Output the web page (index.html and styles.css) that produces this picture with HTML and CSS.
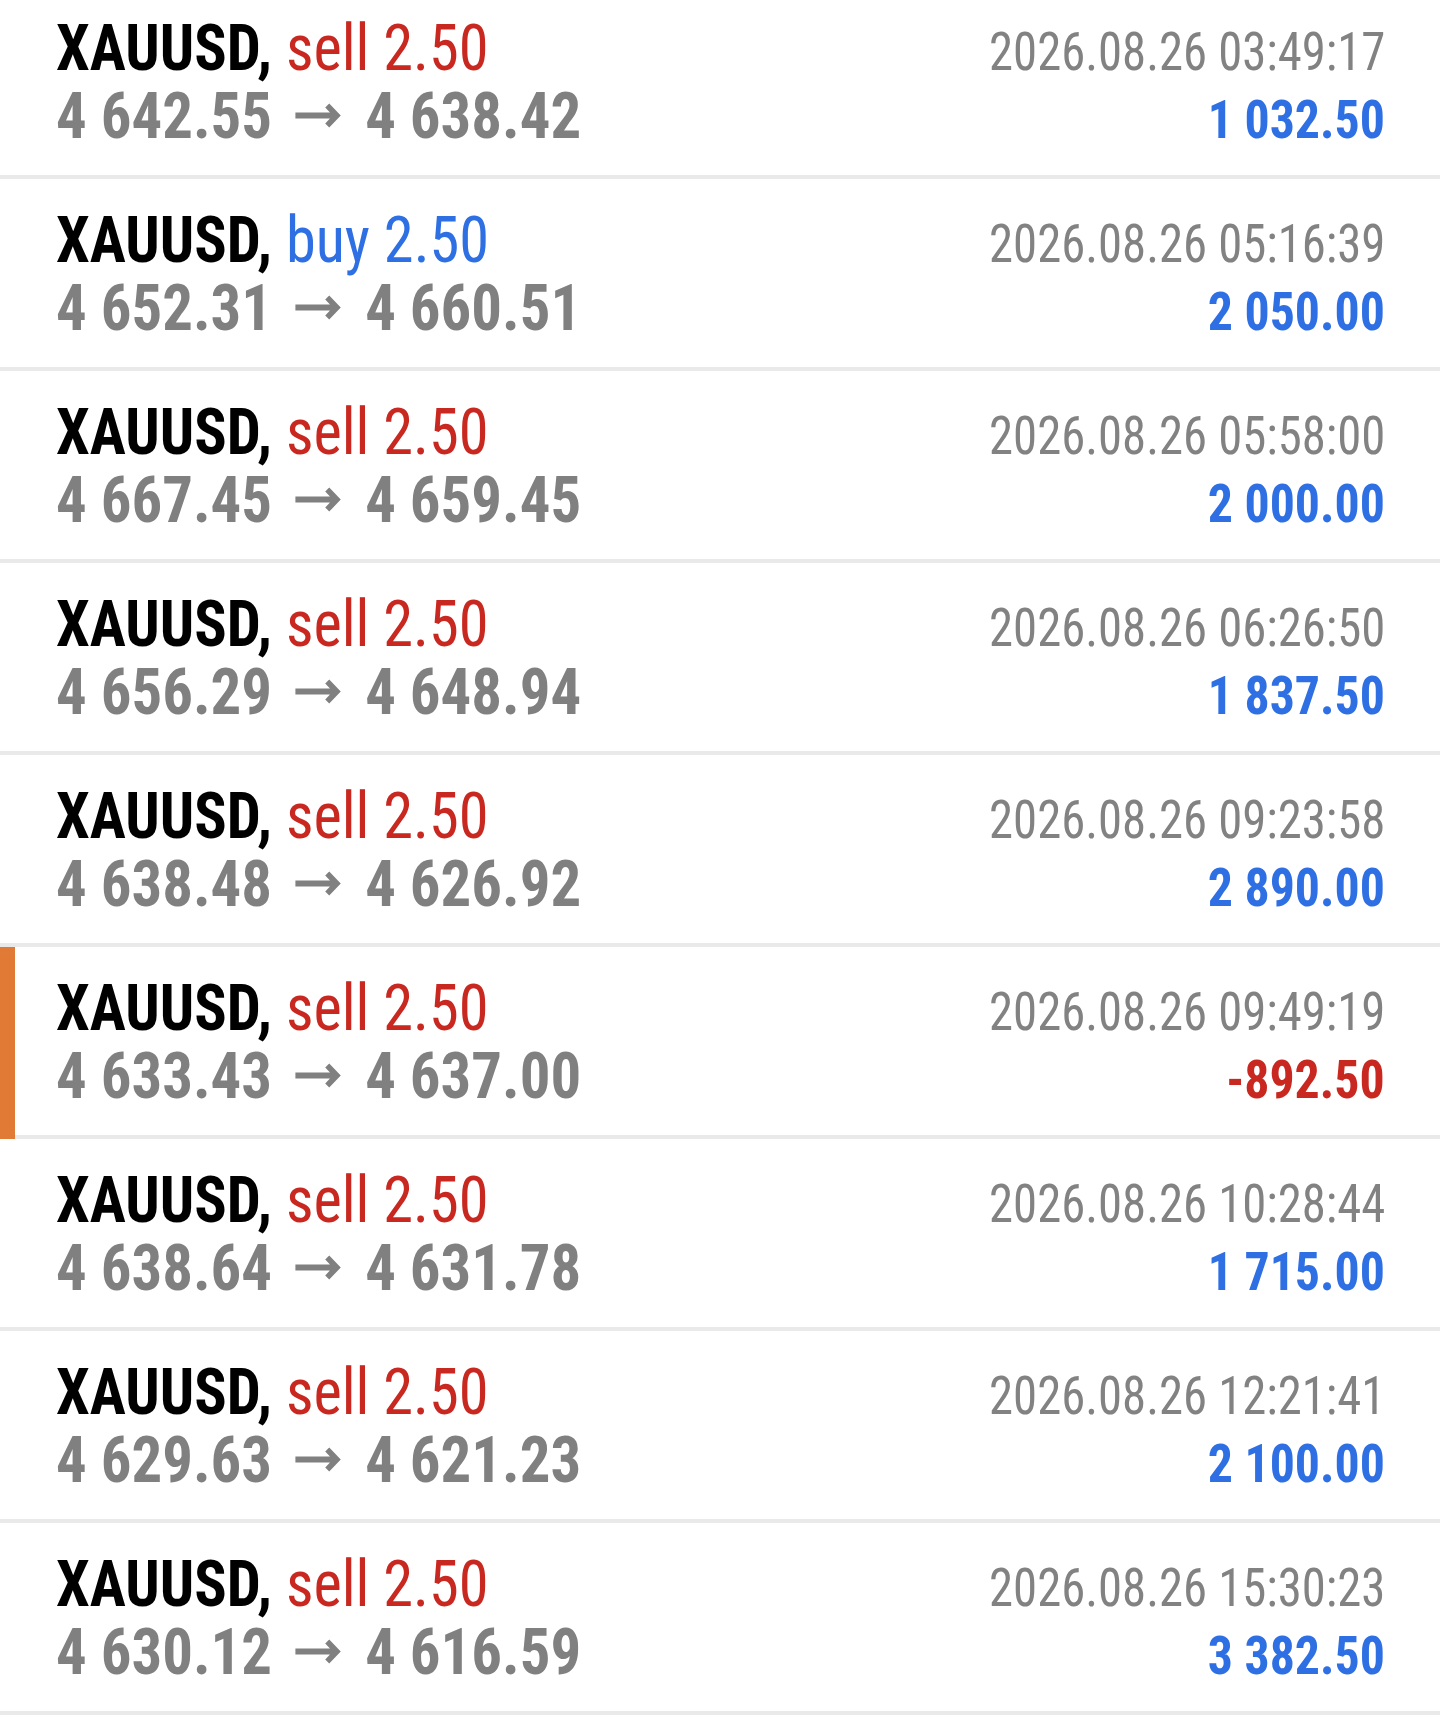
FILE: index.html
```html
<!DOCTYPE html>
<html>
<head>
<meta charset="utf-8">
<link rel="stylesheet" href="styles.css">
</head>
<body>
<div class="list">
  <div class="row"><div class="line"><span class="head"><span class="sym">XAUUSD,</span> <span class="sell">sell 2.50</span></span><span class="date">2026.08.26 03:49:17</span></div><div class="line"><span class="price">4 642.55<svg class="arrow" viewBox="0 0 49 25" width="49" height="25"><path d="M0 12.5H43M33.5 2.5L43.5 12.5L33.5 22.5"/></svg>4 638.42</span><span class="profit">1 032.50</span></div></div>
  <div class="row"><div class="line"><span class="head"><span class="sym">XAUUSD,</span> <span class="buy">buy 2.50</span></span><span class="date">2026.08.26 05:16:39</span></div><div class="line"><span class="price">4 652.31<svg class="arrow" viewBox="0 0 49 25" width="49" height="25"><path d="M0 12.5H43M33.5 2.5L43.5 12.5L33.5 22.5"/></svg>4 660.51</span><span class="profit">2 050.00</span></div></div>
  <div class="row"><div class="line"><span class="head"><span class="sym">XAUUSD,</span> <span class="sell">sell 2.50</span></span><span class="date">2026.08.26 05:58:00</span></div><div class="line"><span class="price">4 667.45<svg class="arrow" viewBox="0 0 49 25" width="49" height="25"><path d="M0 12.5H43M33.5 2.5L43.5 12.5L33.5 22.5"/></svg>4 659.45</span><span class="profit">2 000.00</span></div></div>
  <div class="row"><div class="line"><span class="head"><span class="sym">XAUUSD,</span> <span class="sell">sell 2.50</span></span><span class="date">2026.08.26 06:26:50</span></div><div class="line"><span class="price">4 656.29<svg class="arrow" viewBox="0 0 49 25" width="49" height="25"><path d="M0 12.5H43M33.5 2.5L43.5 12.5L33.5 22.5"/></svg>4 648.94</span><span class="profit">1 837.50</span></div></div>
  <div class="row"><div class="line"><span class="head"><span class="sym">XAUUSD,</span> <span class="sell">sell 2.50</span></span><span class="date">2026.08.26 09:23:58</span></div><div class="line"><span class="price">4 638.48<svg class="arrow" viewBox="0 0 49 25" width="49" height="25"><path d="M0 12.5H43M33.5 2.5L43.5 12.5L33.5 22.5"/></svg>4 626.92</span><span class="profit">2 890.00</span></div></div>
  <div class="row active"><div class="line"><span class="head"><span class="sym">XAUUSD,</span> <span class="sell">sell 2.50</span></span><span class="date">2026.08.26 09:49:19</span></div><div class="line"><span class="price">4 633.43<svg class="arrow" viewBox="0 0 49 25" width="49" height="25"><path d="M0 12.5H43M33.5 2.5L43.5 12.5L33.5 22.5"/></svg>4 637.00</span><span class="profit loss">-892.50</span></div></div>
  <div class="row"><div class="line"><span class="head"><span class="sym">XAUUSD,</span> <span class="sell">sell 2.50</span></span><span class="date">2026.08.26 10:28:44</span></div><div class="line"><span class="price">4 638.64<svg class="arrow" viewBox="0 0 49 25" width="49" height="25"><path d="M0 12.5H43M33.5 2.5L43.5 12.5L33.5 22.5"/></svg>4 631.78</span><span class="profit">1 715.00</span></div></div>
  <div class="row"><div class="line"><span class="head"><span class="sym">XAUUSD,</span> <span class="sell">sell 2.50</span></span><span class="date">2026.08.26 12:21:41</span></div><div class="line"><span class="price">4 629.63<svg class="arrow" viewBox="0 0 49 25" width="49" height="25"><path d="M0 12.5H43M33.5 2.5L43.5 12.5L33.5 22.5"/></svg>4 621.23</span><span class="profit">2 100.00</span></div></div>
  <div class="row"><div class="line"><span class="head"><span class="sym">XAUUSD,</span> <span class="sell">sell 2.50</span></span><span class="date">2026.08.26 15:30:23</span></div><div class="line"><span class="price">4 630.12<svg class="arrow" viewBox="0 0 49 25" width="49" height="25"><path d="M0 12.5H43M33.5 2.5L43.5 12.5L33.5 22.5"/></svg>4 616.59</span><span class="profit">3 382.50</span></div></div>
</div>
</body>
</html>
```
FILE: styles.css
```css
html, body {
  margin: 0;
  padding: 0;
  background: #ffffff;
}
body {
  font-family: Roboto, "Noto Sans", sans-serif;
  font-stretch: condensed;
  overflow: hidden;
}
.list {
  margin-top: -13px;
}
.row {
  position: relative;
  box-sizing: border-box;
  height: 192px;
  padding: 28px 55px 0 56px;
  border-bottom: 4px solid #e9e9e9;
}
.row.active::before {
  content: "";
  position: absolute;
  left: 0;
  top: 0;
  bottom: -4px;
  width: 15px;
  background: #e07a35;
}
.line {
  display: flex;
  align-items: baseline;
  height: 68px;
  line-height: 68px;
}
.head {
  display: inline-block;
  font-size: 64px;
  white-space: pre;
  transform: scaleX(0.943);
  transform-origin: left center;
}
.sym {
  font-weight: 700;
  color: #000000;
}
.sell, .buy {
  font-weight: 400;
  color: #c8281f;
}
.buy {
  color: #2e6fe3;
}
.date {
  display: inline-block;
  margin-left: auto;
  font-size: 54px;
  color: #828282;
  white-space: pre;
  transform: scaleX(0.902);
  transform-origin: right center;
}
.price {
  display: inline-block;
  font-size: 64px;
  font-weight: 700;
  color: #808080;
  white-space: pre;
  transform: scaleX(0.95);
  transform-origin: left center;
}
.arrow {
  display: inline-block;
  vertical-align: 10px;
  margin: 0 24px 0 25px;
  overflow: visible;
}
.arrow path {
  fill: none;
  stroke: #808080;
  stroke-width: 6;
  stroke-linecap: butt;
  stroke-linejoin: miter;
}
.profit {
  display: inline-block;
  margin-left: auto;
  font-size: 54px;
  font-weight: 700;
  color: #2e6fe3;
  white-space: pre;
  transform: scaleX(0.923);
  transform-origin: right center;
}
.profit.loss {
  color: #c8281f;
}
```
